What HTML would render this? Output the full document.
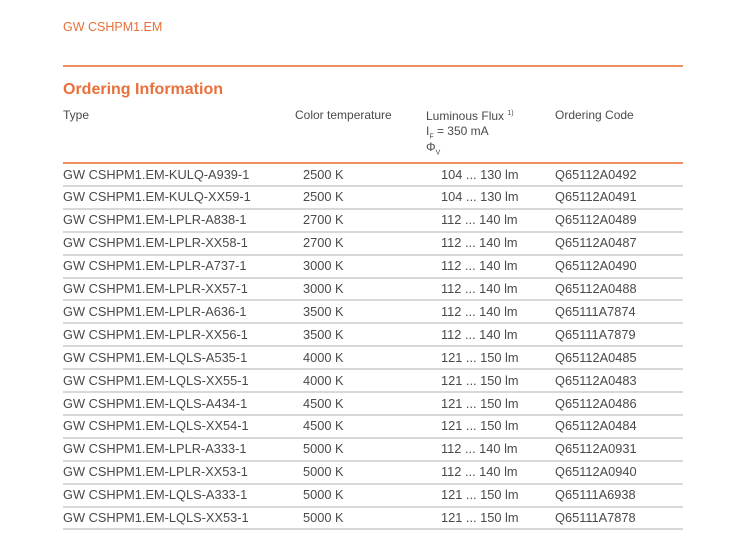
<!DOCTYPE html>
<html><head><meta charset="utf-8"><style>
body{margin:0;width:750px;height:545px;background:#fff;font-family:"Liberation Sans",Arial,sans-serif;position:relative;overflow:hidden;color:#4a4a4a}
.a{position:absolute;white-space:nowrap;font-size:12px;line-height:14px}
.r{font-size:12.8px;line-height:15px}
.l{position:absolute;left:63px;width:620px;height:2px;background:#d8d8d8}
</style></head><body>
<div class="a" style="left:63px;top:20px;color:#e8703a;font-size:12.5px">GW CSHPM1.EM</div>
<div style="position:absolute;left:63px;top:65px;width:620px;height:2px;background:#ee8f5f"></div>
<div class="a" style="left:63px;top:80px;color:#e8703a;font-size:16px;line-height:19px;font-weight:bold">Ordering Information</div>
<div class="a" style="left:63px;top:108px">Type</div>
<div class="a" style="left:295px;top:108px">Color temperature</div>
<div class="a" style="left:426px;top:107px">Luminous Flux <sup style="font-size:7px">1)</sup></div>
<div class="a" style="left:426px;top:124px">I<sub style="font-size:7px">F</sub> = 350 mA</div>
<div class="a" style="left:426px;top:140px">Φ<sub style="font-size:7px">V</sub></div>
<div class="a" style="left:555px;top:108px">Ordering Code</div>
<div style="position:absolute;left:63px;top:162px;width:620px;height:2px;background:#ee8f5f"></div>
<div id="rows"></div>
<script>
var d=[["GW CSHPM1.EM-KULQ-A939-1","2500 K","104 ... 130 lm","Q65112A0492"],
["GW CSHPM1.EM-KULQ-XX59-1","2500 K","104 ... 130 lm","Q65112A0491"],
["GW CSHPM1.EM-LPLR-A838-1","2700 K","112 ... 140 lm","Q65112A0489"],
["GW CSHPM1.EM-LPLR-XX58-1","2700 K","112 ... 140 lm","Q65112A0487"],
["GW CSHPM1.EM-LPLR-A737-1","3000 K","112 ... 140 lm","Q65112A0490"],
["GW CSHPM1.EM-LPLR-XX57-1","3000 K","112 ... 140 lm","Q65112A0488"],
["GW CSHPM1.EM-LPLR-A636-1","3500 K","112 ... 140 lm","Q65111A7874"],
["GW CSHPM1.EM-LPLR-XX56-1","3500 K","112 ... 140 lm","Q65111A7879"],
["GW CSHPM1.EM-LQLS-A535-1","4000 K","121 ... 150 lm","Q65112A0485"],
["GW CSHPM1.EM-LQLS-XX55-1","4000 K","121 ... 150 lm","Q65112A0483"],
["GW CSHPM1.EM-LQLS-A434-1","4500 K","121 ... 150 lm","Q65112A0486"],
["GW CSHPM1.EM-LQLS-XX54-1","4500 K","121 ... 150 lm","Q65112A0484"],
["GW CSHPM1.EM-LPLR-A333-1","5000 K","112 ... 140 lm","Q65112A0931"],
["GW CSHPM1.EM-LPLR-XX53-1","5000 K","112 ... 140 lm","Q65112A0940"],
["GW CSHPM1.EM-LQLS-A333-1","5000 K","121 ... 150 lm","Q65111A6938"],
["GW CSHPM1.EM-LQLS-XX53-1","5000 K","121 ... 150 lm","Q65111A7878"]];
var h="";
for(var i=0;i<d.length;i++){var y=163+i*22.9;var t=y+3.5;
h+='<div class="a r" style="left:63px;top:'+t+'px">'+d[i][0]+'</div>';
h+='<div class="a r" style="left:303px;top:'+t+'px">'+d[i][1]+'</div>';
h+='<div class="a r" style="left:441px;top:'+t+'px">'+d[i][2]+'</div>';
h+='<div class="a r" style="left:555px;top:'+t+'px">'+d[i][3]+'</div>';
h+='<div class="l" style="top:'+(y+21.9)+'px"></div>';}
document.getElementById("rows").innerHTML=h;
</script>
</body></html>
